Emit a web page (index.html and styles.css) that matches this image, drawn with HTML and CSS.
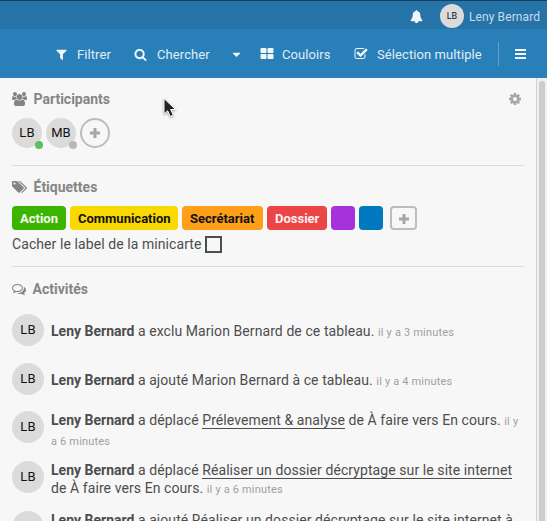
FILE: index.html
```html
<!DOCTYPE html>
<html lang="fr">
<head>
<meta charset="utf-8">
<title>Tableau</title>
<link rel="stylesheet" href="styles.css">
</head>
<body>
<svg class="defs" width="0" height="0">
<symbol id="users" viewBox="0 0 1920 1792"><path d="M593 896q-162 5-265 128h-134q-82 0-138-40.5t-56-118.500q0-353 124-353 6 0 43.500 21t97.500 42.500 119 21.500q67 0 133-23-5 37-5 66 0 139 81 256zm1071 637q0 120-73 189.500t-194 69.500h-874q-121 0-194-69.500t-73-189.500q0-53 3.500-103.500t14-109 26.500-108.500 43-97.500 62-81 85.500-53.500 111.500-20q10 0 43 21.500t73 48 107 48 135 21.500 135-21.500 107-48 73-48 43-21.500q61 0 111.500 20t85.500 53.500 62 81 43 97.500 26.500 108.500 14 109 3.500 103.500zm-1024-1277q0 106-75 181t-181 75-181-75-75-181 75-181 181-75 181 75 75 181zm704 384q0 159-112.500 271.500t-271.500 112.500-271.500-112.500-112.500-271.500 112.500-271.500 271.500-112.500 271.500 112.500 112.500 271.500zm576 225q0 78-56 118.500t-138 40.500h-134q-103-123-265-128 81-117 81-256 0-29-5-66 66 23 133 23 59 0 119-21.500t97.500-42.500 43.500-21q124 0 124 353zm-128-609q0 106-75 181t-181 75-181-75-75-181 75-181 181-75 181 75 75 181z"/></symbol>
<symbol id="plus" viewBox="0 0 12 12"><path d="M4.500 1h3v3.500h3.500v3H7.500v3.500h-3V7.500H1v-3h3.500z"/></symbol>
</svg>
<header class="topbar">
  <svg class="bell" viewBox="0 0 1792 1792"><path d="M1728 1408q0 52-38 90t-90 38h-448q0 106-75 181t-181 75-181-75-75-181h-448q-52 0-90-38t-38-90q50-42 91-88t85-119.500 74.500-158.500 50-206 19.500-260q0-152 117-282.500t307-158.500q-8-19-8-39 0-40 28-68t68-28 68 28 28 68q0 20-8 39 190 28 307 158.500t117 282.500q0 139 19.500 260t50 206 74.500 158.500 85 119.500 91 88z"/></svg>
  <span class="avatar avatar-small">LB</span>
  <span class="user-name">Leny Bernard</span>
</header>
<nav class="toolbar">
  <a class="tool filter"><svg class="icon" viewBox="0 0 1792 1792"><path d="M1595 295q17 41-14 70l-493 493v742q0 42-39 59-13 5-25 5-27 0-45-19l-256-256q-19-19-19-45v-486l-493-493q-31-29-14-70 17-39 59-39h1280q42 0 59 39z"/></svg><span>Filtrer</span></a>
  <a class="tool search"><svg class="icon" viewBox="0 0 1792 1792"><path d="M1216 832q0-185-131.500-316.500t-316.500-131.500-316.500 131.500-131.500 316.500 131.500 316.500 316.500 131.500 316.500-131.500 131.500-316.500zm512 832q0 52-38 90t-90 38q-54 0-90-38l-343-342q-179 124-399 124-143 0-273.500-55.500t-225-150-150-225-55.500-273.500 55.500-273.500 150-225 225-150 273.500-55.500 273.500 55.500 225 150 150 225 55.500 273.500q0 220-124 399l343 343q37 37 37 90z"/></svg><span>Chercher</span></a>
  <a class="tool caret"><svg class="icon" viewBox="0 0 1792 1792"><path d="M1408 704q0 26-19 45l-448 448q-19 19-45 19t-45-19l-448-448q-19-19-19-45t19-45 45-19h896q26 0 45 19t19 45z"/></svg></a>
  <a class="tool lanes"><svg class="icon" viewBox="0 0 1792 1792"><path d="M832 1024v384q0 52-38 90t-90 38h-512q-52 0-90-38t-38-90v-384q0-52 38-90t90-38h512q52 0 90 38t38 90zm0-768v384q0 52-38 90t-90 38h-512q-52 0-90-38t-38-90v-384q0-52 38-90t90-38h512q52 0 90 38t38 90zm896 768v384q0 52-38 90t-90 38h-512q-52 0-90-38t-38-90v-384q0-52 38-90t90-38h512q52 0 90 38t38 90zm0-768v384q0 52-38 90t-90 38h-512q-52 0-90-38t-38-90v-384q0-52 38-90t90-38h512q52 0 90 38t38 90z"/></svg><span>Couloirs</span></a>
  <a class="tool multi"><svg class="icon" viewBox="0 0 1792 1792"><path d="M1472 930v318q0 119-84.500 203.500t-203.500 84.500h-832q-119 0-203.500-84.500t-84.500-203.500v-832q0-119 84.500-203.500t203.500-84.500h832q63 0 117 25 15 7 18 23 3 17-9 29l-49 49q-10 10-23 10-3 0-9-2-23-6-45-6h-832q-66 0-113 47t-47 113v832q0 66 47 113t113 47h832q66 0 113-47t47-113v-254q0-13 9-22l64-64q10-10 23-10 6 0 12 3 20 8 20 29zm231-489l-814 814q-24 24-57 24t-57-24l-430-430q-24-24-24-57t24-57l110-110q24-24 57-24t57 24l263 263 647-647q24-24 57-24t57 24l110 110q24 24 24 57t-24 57z"/></svg><span>Sélection multiple</span></a>
  <a class="tool menu"><svg class="icon" viewBox="0 0 14 14"><path d="M1 2h11v2H1zM1 6h11v2H1zM1 10h11v2H1z"/></svg></a>
</nav>
<div class="main">
  <aside class="sidebar">
    <section class="members">
      <h3><svg class="icon head" viewBox="0 0 1920 1792"><use href="#users"/></svg><span>Participants</span>
      <svg class="cog" viewBox="0 0 1792 1792"><path d="M1152 896q0-106-75-181t-181-75-181 75-75 181 75 181 181 75 181-75 75-181zm512-109v222q0 12-8 23t-20 13l-185 28q-19 54-39 91 35 50 107 138 10 12 10 25t-9 23q-27 37-99 108t-94 71q-12 0-26-9l-138-108q-44 23-91 38-16 136-29 186-7 28-36 28h-222q-14 0-24.500-8.500t-11.500-21.500l-28-184q-49-16-90-37l-141 107q-10 9-25 9-14 0-25-11-126-114-165-168-7-10-7-23 0-12 8-23 15-21 51-66.500t54-70.500q-27-50-41-99l-183-27q-13-2-21-12.500t-8-23.500v-222q0-12 8-23t19-13l186-28q14-46 39-92-40-57-107-138-10-12-10-24 0-10 9-23 26-36 98.500-107.500t94.500-71.500q13 0 26 10l138 107q44-23 91-38 16-136 29-186 7-28 36-28h222q14 0 24.500 8.500t11.500 21.500l28 184q49 16 90 37l142-107q9-9 24-9 13 0 25 10 129 119 165 170 7 8 7 22 0 12-8 23-15 21-51 66.500t-54 70.500q26 50 41 98l183 28q13 2 21 12.500t8 23.500z"/></svg></h3>
      <div class="member-list">
        <span class="avatar member">LB<i class="presence online"></i></span>
        <span class="avatar member">MB<i class="presence"></i></span>
        <span class="add-member"><svg class="plus" viewBox="0 0 12 12"><use href="#plus"/></svg></span>
      </div>
    </section>
    <section class="labels">
      <h3><svg class="icon head" viewBox="0 0 1920 1792"><path d="M448 448q0-53-37.500-90.500t-90.500-37.500-90.500 37.500-37.500 90.500 37.500 90.500 90.500 37.500 90.500-37.500 37.500-90.500zm1067 576q0 53-37 90l-491 492q-39 37-91 37-53 0-90-37l-715-716q-38-37-64.500-101t-26.500-117v-416q0-52 38-90t90-38h416q53 0 117 26.500t102 64.500l715 714q37 39 37 91zm384 0q0 53-37 90l-491 492q-39 37-91 37-36 0-59-14t-53-45l470-470q37-37 37-90 0-52-37-91l-715-714q-38-38-102-64.500t-117-26.500h224q53 0 117 26.500t102 64.500l715 714q37 39 37 91z"/></svg><span>Étiquettes</span></h3>
      <div class="label-list">
        <span class="label green">Action</span>
        <span class="label yellow">Communication</span>
        <span class="label orange">Secrétariat</span>
        <span class="label red">Dossier</span>
        <span class="label purple"></span>
        <span class="label blue"></span>
        <span class="add-label"><svg class="plus" viewBox="0 0 12 12"><use href="#plus"/></svg></span>
      </div>
      <div class="hide-label"><span>Cacher le label de la minicarte</span><span class="checkbox"></span></div>
    </section>
    <section class="activities">
      <h3><svg class="icon comments" viewBox="0 0 1792 1792"><path d="M704 384q-153 0-286 52t-211.500 141-78.500 191q0 82 53 158t149 132l97 56-35 84q34-20 62-39l44-31 53 10q78 14 153 14 153 0 286-52t211.500-141 78.500-191-78.500-191-211.500-141-286-52zm0-128q191 0 353.500 68.500t256.500 186.500 94 257-94 257-256.500 186.500-353.500 68.500q-86 0-176-16-124 88-278 128-36 9-86 16h-3q-11 0-20.500-8t-11.500-21q-1-3-1-6.500t.5-6.500 2-6l2.500-5 3.500-5.500 4-5 4.500-5 4-4.500q5-6 23-25t26-29.500 22.500-29 25-38.500 20.500-44q-124-72-195-177t-71-224q0-139 94-257t256.500-186.500 353.500-68.500zm822 1169q10 24 20.500 44t25 38.500 22.500 29 26 29.500 23 25q1 1 4 4.500t4.500 5 4 5 3.500 5.500l2.500 5 2 6 .5 6.500-1 6.500q-3 14-13 22t-22 7q-50-7-86-16-154-40-278-128-90 16-176 16-271 0-472-132 58 4 88 4 161 0 309-45t264-129q125-92 192-212t67-254q0-77-23-152 129 71 204 178t75 230q0 120-71 224.500t-195 176.500z"/></svg><span>Activités</span></h3>
      <div class="activity first"><span class="avatar large">LB</span><p><b>Leny Bernard</b> a exclu Marion Bernard de ce tableau. <small>il y a 3 minutes</small></p></div>
      <div class="activity second"><span class="avatar large">LB</span><p><b>Leny Bernard</b> a ajouté Marion Bernard à ce tableau. <small>il y a 4 minutes</small></p></div>
      <div class="activity"><span class="avatar large">LB</span><p><b>Leny Bernard</b> a déplacé <a>Prélevement &amp; analyse</a> de À faire vers En cours. <small>il y<br>a 6 minutes</small></p></div>
      <div class="activity"><span class="avatar large">LB</span><p><b>Leny Bernard</b> a déplacé <a>Réaliser un dossier décryptage sur le site internet</a><br>de À faire vers En cours. <small>il y a 6 minutes</small></p></div>
      <div class="activity"><span class="avatar large">LB</span><p><b>Leny Bernard</b> a ajouté Réaliser un dossier décryptage sur le site internet à</p></div>
    </section>
  </aside>
  <div class="scrollbar"><div class="thumb"></div></div>
</div>
<svg class="cursor" viewBox="0 0 16 22"><path d="M2 1.500v15.500l3.600-3.200 2.800 5.700 2.900-1.400-2.700-5.600h5z"/></svg>
</body>
</html>
```

FILE: styles.css
```css
* { box-sizing: border-box; }
body {
  margin: 0;
  width: 547px;
  height: 521px;
  overflow: hidden;
  display: flex;
  flex-direction: column;
  background: #f7f7f7;
  color: #4d4d4d;
  font: 14px/18px Roboto, "Liberation Sans", sans-serif;
}
svg { display: block; flex: none; fill: currentColor; }
.defs { position: absolute; }
h3, p { margin: 0; }

.topbar {
  flex: none;
  height: 29px;
  padding: 2px 7px 0 0;
  border-top: 1px solid #173f5c;
  background: #2573a7;
  color: #c7dceb;
  display: flex;
  align-items: center;
  justify-content: flex-end;
}
.bell { width: 13px; height: 13px; margin-right: 17px; color: #f2f6f9; }
.avatar {
  flex: none;
  display: flex;
  align-items: center;
  justify-content: center;
  border-radius: 50%;
  background: #dbdbdb;
  color: #111;
}
.avatar-small { width: 24px; height: 24px; font-size: 9px; }
.user-name {
  width: 71px;
  margin: 1px 0 0 5px;
  white-space: nowrap;
  font-size: 12px;
  letter-spacing: .1px;
}

.toolbar {
  flex: none;
  height: 49px;
  background: #2980b9;
  color: #e1edf5;
  display: flex;
  align-items: center;
  padding: 1px 0 0 55px;
  font-size: 13px;
  letter-spacing: .09px;
}
.tool { display: flex; align-items: center; flex: none; white-space: nowrap; }
.tool span { padding-top: 1px; }
.tool .icon { width: 13px; height: 13px; color: #f2f7fa; }
.filter { width: 79px; gap: 9px; }
.search { width: 96px; gap: 10px; }
.caret { width: 30px; }
.lanes { width: 94px; gap: 8px; }
.multi { width: 144px; gap: 9px; }
.menu { height: 24px; border-left: 1px solid #61a0cb; padding-left: 15px; }
.menu .icon { width: 14px; height: 14px; }
.lanes .icon, .multi .icon { width: 14px; height: 14px; }

.main { flex: 1; display: flex; min-height: 0; }
.sidebar { width: 536px; padding: 0 12px; overflow: hidden; letter-spacing: .08px; }
.scrollbar {
  width: 11px;
  background: #f0f0f0;
  border-left: 1px solid #d0d1c8;
  padding: 3px 2px 0;
}
.thumb { width: 6px; height: 100%; border-radius: 3px 3px 0 0; background: #cccdcb; }

h3 {
  display: flex;
  align-items: center;
  height: 18px;
  color: #858585;
  font-size: 14px;
  font-weight: 700;
  letter-spacing: 0;
}
.head { width: 15px; height: 14px; margin-right: 6.500px; }
.comments { width: 14px; height: 14px; margin-right: 6.500px; }
.cog { width: 14px; height: 14px; margin-left: auto; margin-right: 2px; color: #a6a6a6; }

.members { height: 88px; padding-top: 12px; border-bottom: 1px solid #dbdbdb; }
.member-list { display: flex; gap: 4px; padding-top: 10px; }
.member { position: relative; width: 30px; height: 30px; font-size: 13px; }
.presence {
  position: absolute;
  right: -1px;
  bottom: -1px;
  width: 8px;
  height: 8px;
  border-radius: 50%;
  background: #b8b8b8;
}
.online { background: #5bc060; }
.add-member, .add-label {
  display: flex;
  align-items: center;
  justify-content: center;
  border: 2px solid #bdbdbd;
  color: #a6a6a6;
}
.add-member { width: 30px; height: 30px; border-radius: 50%; }
.plus { width: 12px; height: 12px; }

.labels { height: 101px; padding-top: 12px; border-bottom: 1px solid #dbdbdb; }
.label-list { display: flex; gap: 4px; margin-top: 10px; letter-spacing: 0; }
.label {
  height: 24px;
  min-width: 24px;
  padding: 0 8px;
  border-radius: 4px;
  font-size: 13px;
  font-weight: 700;
  line-height: 26px;
}
.green { background: #3cb500; color: #f4fbf1; width: 54px; }
.yellow { background: #fad900; color: #111; width: 108px; }
.orange { background: #ff9f19; color: #111; width: 81px; }
.red { background: #eb4646; color: #fdefef; width: 60px; }
.purple { background: #a632db; }
.blue { background: #0079bf; }
.add-label { width: 27px; height: 24px; margin-left: 3px; border-radius: 4px; padding-top: 1px; }
.hide-label { display: flex; align-items: center; gap: 3px; margin-top: 5px; height: 18px; }
.checkbox { width: 17px; height: 17px; border: 2px solid #4d4d4d; }

.activities { padding-top: 13px; }
.activity { display: flex; gap: 7px; height: 50px; white-space: nowrap; }
.activity.first { margin-top: 16px; height: 49px; }
.activity.first p, .activity.second p { padding-top: 8px; }
.activity.second { height: 48px; }
.large { width: 32px; height: 32px; font-size: 13px; }
.activity b { letter-spacing: 0; }
.activity a { display: inline-block; height: 18px; line-height: 18px; border-bottom: 1px solid #4d4d4d; vertical-align: top; }
small { font-size: 11px; color: #a0a0a0; letter-spacing: .18px; }

.cursor {
  position: absolute;
  left: 162px;
  top: 97px;
  width: 16px;
  height: 22px;
  fill: #222;
  stroke: #fff;
  stroke-width: 1;
  filter: drop-shadow(0 1px 1px rgba(0, 0, 0, .35));
}
```
